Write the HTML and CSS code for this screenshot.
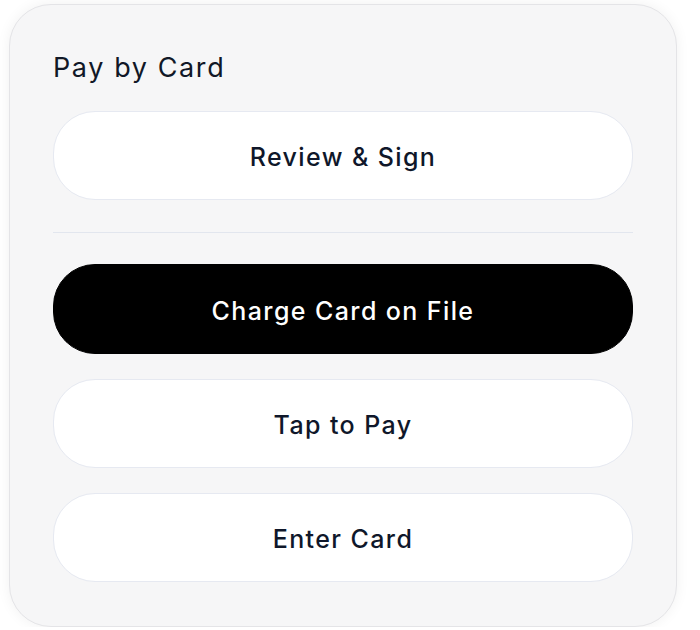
FILE: index.html
```html
<!DOCTYPE html>
<html lang="en">
<head>
    <meta charset="UTF-8">
    <meta name="viewport" content="width=device-width, initial-scale=1.0">
    <title>Pay by Card</title>
    <link rel="stylesheet" href="styles.css">
</head>
<body>

<div class="card">
    <h2 class="title">Pay by Card</h2>
    <button class="option">Review &amp; Sign</button>
    <div class="divider"></div>
    <button class="option primary">Charge Card on File</button>
    <button class="option">Tap to Pay</button>
    <button class="option">Enter Card</button>
</div>

</body>
</html>
```

FILE: styles.css
```css
body {
    margin: 0;
    background: #ffffff;
    font-family: Inter, "Noto Sans", sans-serif;
}
.card {
    margin: 4px 0 0 9px;
    width: 668px;
    box-sizing: border-box;
    background: #f6f6f7;
    border: 1px solid #e4e4e7;
    border-radius: 42px;
    box-shadow: 0 0 14px rgba(0, 0, 0, 0.06);
    padding: 45px 43px 44px;
    display: flex;
    flex-direction: column;
    gap: 25px;
}
.title {
    margin: 0;
    font-size: 27px;
    font-weight: 400;
    letter-spacing: 1.6px;
    line-height: 36px;
    color: #111827;
}
.option {
    height: 89px;
    width: 100%;
    padding: 3px 0 0;
    background: #ffffff;
    border: 1px solid #e6e9f1;
    border-radius: 42px;
    font-family: inherit;
    font-size: 25px;
    font-weight: 500;
    letter-spacing: 1.4px;
    color: #0f172a;
    cursor: pointer;
}
.primary {
    height: 90px;
    background: #000000;
    border-color: #000000;
    color: #ffffff;
}
.divider {
    height: 1px;
    background: #e2e6ee;
    margin: 7px 0 6px;
}
```
